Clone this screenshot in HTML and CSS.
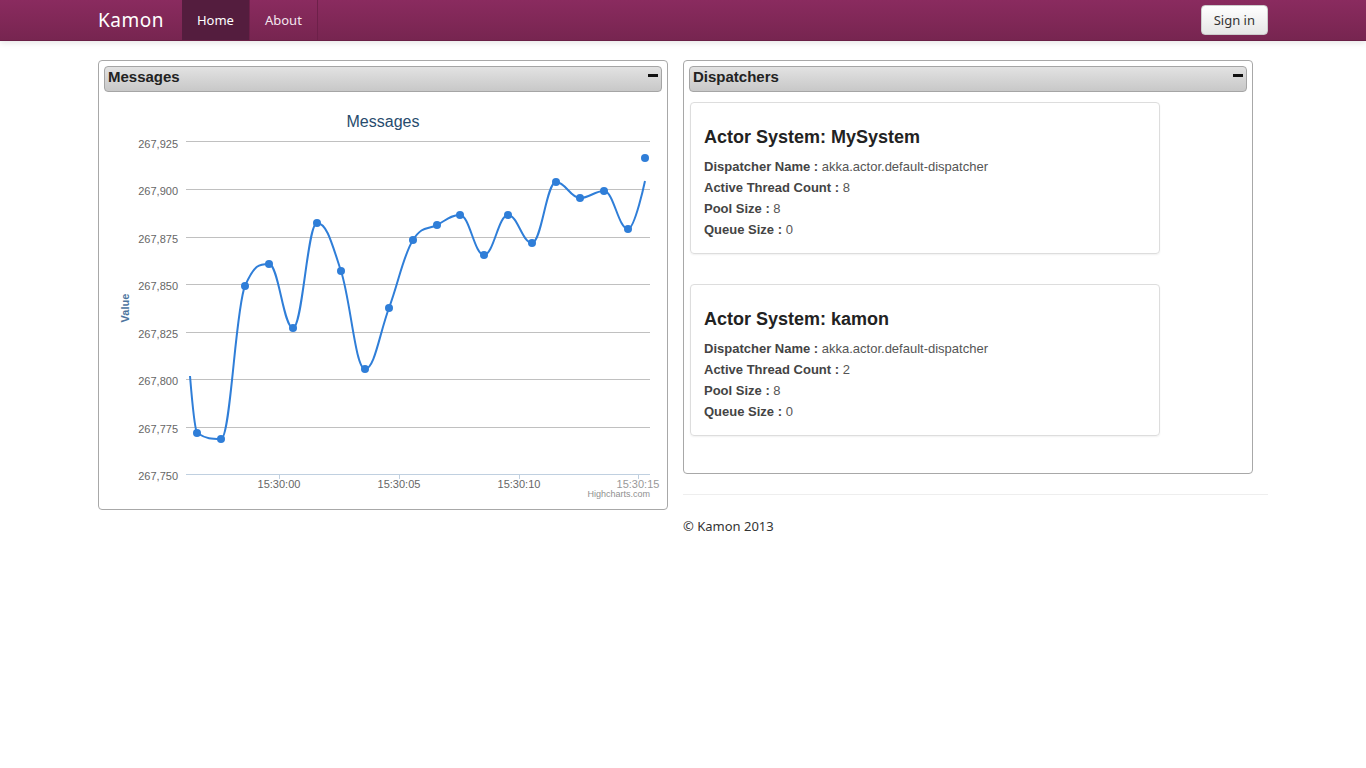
FILE: index.html
```html
<!DOCTYPE html>
<html>
<head>
<meta charset="utf-8">
<title>Kamon</title>
<link rel="stylesheet" href="styles.css">
</head>
<body>
<header class="navbar">
  <div class="nav-inner">
    <a class="brand" href="#">Kamon</a>
    <ul class="nav">
      <li class="active"><a href="#">Home</a></li>
      <li><a href="#">About</a></li>
    </ul>
    <button class="signin">Sign in</button>
  </div>
</header>

<main class="container">
  <section class="col">
    <div class="panel panel-messages">
      <div class="panel-head"><span>Messages</span><i class="minus"></i></div>
      <svg class="chart" width="568" height="417" viewBox="99 92 568 417" xmlns="http://www.w3.org/2000/svg">
        <text x="383" y="127" text-anchor="middle" class="c-title">Messages</text>
        <g stroke="#c0c0c0" stroke-width="1">
          <line x1="186" x2="650" y1="141.5" y2="141.5"/>
          <line x1="186" x2="650" y1="189.5" y2="189.5"/>
          <line x1="186" x2="650" y1="237.5" y2="237.5"/>
          <line x1="186" x2="650" y1="284.5" y2="284.5"/>
          <line x1="186" x2="650" y1="332.5" y2="332.5"/>
          <line x1="186" x2="650" y1="379.5" y2="379.5"/>
          <line x1="186" x2="650" y1="427.5" y2="427.5"/>
        </g>
        <g stroke="#c0d0e0" stroke-width="1">
          <line x1="186" x2="650" y1="474.5" y2="474.5"/>
          <line x1="279.5" x2="279.5" y1="474" y2="479"/>
          <line x1="399.5" x2="399.5" y1="474" y2="479"/>
          <line x1="519.5" x2="519.5" y1="474" y2="479"/>
          <line x1="638.5" x2="638.5" y1="474" y2="479"/>
        </g>
        <g class="c-ylab" text-anchor="end">
          <text x="178" y="148">267,925</text>
          <text x="178" y="195">267,900</text>
          <text x="178" y="243">267,875</text>
          <text x="178" y="290">267,850</text>
          <text x="178" y="338">267,825</text>
          <text x="178" y="385">267,800</text>
          <text x="178" y="433">267,775</text>
          <text x="178" y="480">267,750</text>
        </g>
        <g class="c-xlab" text-anchor="middle">
          <text x="279" y="488">15:30:00</text>
          <text x="399" y="488">15:30:05</text>
          <text x="519" y="488">15:30:10</text>
          <text x="638" y="488" class="c-faded">15:30:15</text>
        </g>
        <text class="c-axis" transform="translate(129 308) rotate(-90)" text-anchor="middle">Value</text>
        <path fill="none" stroke="#2f7ed8" stroke-width="2" stroke-linejoin="round" d="M190,376 C190,376 194.2,427 197,433 C206.6,439 211.4,439 221,439 C230.6,439 235.4,308 245,286 C254.6,264 259.4,264 269,264 C278.6,264 283.4,328 293,328 C302.6,328 307.4,223 317,223 C326.6,223 331.4,241.8 341,271 C350.6,300.2 355.4,369 365,369 C374.6,369 379.4,333.8 389,308 C398.6,282.2 403.4,255 413,240 C422.6,225 427.4,230.1 437,225 C446.2,220.1 450.8,215 460,215 C469.6,215 474.4,255 484,255 C493.6,255 498.4,215 508,215 C517.6,215 522.4,243 532,243 C541.6,243 546.4,182 556,182 C565.6,182 570.4,198 580,198 C589.6,198 594.4,191 604,191 C613.6,191 618.4,229 628,229 C634.8,229 645,181 645,181"/>
        <g fill="#2f7ed8">
          <circle cx="197" cy="433" r="4"/>
          <circle cx="221" cy="439" r="4"/>
          <circle cx="245" cy="286" r="4"/>
          <circle cx="269" cy="264" r="4"/>
          <circle cx="293" cy="328" r="4"/>
          <circle cx="317" cy="223" r="4"/>
          <circle cx="341" cy="271" r="4"/>
          <circle cx="365" cy="369" r="4"/>
          <circle cx="389" cy="308" r="4"/>
          <circle cx="413" cy="240" r="4"/>
          <circle cx="437" cy="225" r="4"/>
          <circle cx="460" cy="215" r="4"/>
          <circle cx="484" cy="255" r="4"/>
          <circle cx="508" cy="215" r="4"/>
          <circle cx="532" cy="243" r="4"/>
          <circle cx="556" cy="182" r="4"/>
          <circle cx="580" cy="198" r="4"/>
          <circle cx="604" cy="191" r="4"/>
          <circle cx="628" cy="229" r="4"/>
          <circle cx="645" cy="158" r="4"/>
        </g>
        <text x="650" y="497" text-anchor="end" class="c-credit">Highcharts.com</text>
      </svg>
    </div>
  </section>

  <section class="col">
    <div class="panel panel-dispatchers">
      <div class="panel-head"><span>Dispatchers</span><i class="minus"></i></div>
      <div class="cards">
        <div class="card">
          <h3>Actor System: MySystem</h3>
          <p><b>Dispatcher Name :</b> akka.actor.default-dispatcher</p>
          <p><b>Active Thread Count :</b> 8</p>
          <p><b>Pool Size :</b> 8</p>
          <p><b>Queue Size :</b> 0</p>
        </div>
        <div class="card">
          <h3>Actor System: kamon</h3>
          <p><b>Dispatcher Name :</b> akka.actor.default-dispatcher</p>
          <p><b>Active Thread Count :</b> 2</p>
          <p><b>Pool Size :</b> 8</p>
          <p><b>Queue Size :</b> 0</p>
        </div>
      </div>
    </div>
    <hr class="rule">
    <footer class="footer">© Kamon 2013</footer>
  </section>
</main>
</body>
</html>
```

FILE: styles.css
```css
* { box-sizing: border-box; }
html, body { margin: 0; padding: 0; background: #fff; }
body { font-family: "Noto Sans", "DejaVu Sans", sans-serif; color: #333; }

.navbar {
  height: 41px;
  background: linear-gradient(#8a2b5f, #772550);
  border-bottom: 1px solid #6a1f46;
  box-shadow: 0 2px 6px rgba(0,0,0,0.1);
}
.nav-inner {
  width: 1170px;
  margin: 0 auto;
  height: 40px;
  display: flex;
  align-items: center;
}
.brand {
  font-size: 19px;
  color: #fff;
  text-decoration: none;
  letter-spacing: 0.5px;
  margin-right: 18px;
  line-height: 40px;
}
.nav {
  display: flex;
  list-style: none;
  margin: 0;
  padding: 0;
  height: 40px;
}
.nav li { border-right: 1px solid #6d2049; }
.nav li a {
  display: block;
  padding: 0 15px;
  line-height: 40px;
  font-size: 13px;
  color: #f3e6ee;
  text-decoration: none;
}
.nav li.active a { background: #541d3e; color: #fff; }
.signin {
  margin-left: auto;
  height: 30px;
  padding: 0 12px;
  font-family: inherit;
  font-size: 13px;
  color: #333;
  background: linear-gradient(#fff, #e6e6e6);
  border: 1px solid #ccc;
  border-radius: 4px;
}

.container {
  width: 1170px;
  margin: 19px auto 0;
  display: grid;
  grid-template-columns: 585px 585px;
  align-items: start;
}

.panel {
  width: 570px;
  border: 1px solid #a8a8a8;
  border-radius: 4px;
  font-family: "Liberation Sans", Arial, sans-serif;
}
.panel-head {
  margin: 5px 5px 0;
  height: 26px;
  padding: 1px 3px 0;
  display: flex;
  align-items: flex-start;
  justify-content: space-between;
  background: linear-gradient(#e2e2e2, #c8c8c8);
  border: 1px solid #a5a5a5;
  border-radius: 4px;
  font-weight: bold;
  font-size: 15px;
  line-height: 18px;
  color: #222;
}
.minus {
  display: block;
  width: 10px;
  height: 3px;
  background: #111;
  margin-top: 6px;
}
.chart { display: block; }
.c-title { font-family: "Liberation Sans", Arial, sans-serif; font-size: 16px; fill: #274b6d; }
.c-ylab text, .c-xlab text { font-family: "Liberation Sans", Arial, sans-serif; font-size: 11px; fill: #666; }
.c-xlab .c-faded { fill: #999; }
.c-axis { font-family: "Liberation Sans", Arial, sans-serif; font-size: 11px; font-weight: bold; fill: #4d759e; }
.c-credit { font-family: "Liberation Sans", Arial, sans-serif; font-size: 9px; fill: #909090; }

.cards { padding: 10px 6px 37px; display: flex; flex-direction: column; gap: 30px; }
.card {
  width: 470px;
  border: 1px solid #ddd;
  border-radius: 4px;
  box-shadow: 0 1px 2px rgba(0,0,0,0.06);
  padding: 24px 13px 13px;
}
.card h3 {
  margin: 0 0 9px;
  font-size: 18px;
  line-height: 20px;
  color: #222;
}
.card p {
  margin: 0;
  font-size: 13px;
  line-height: 21px;
  color: #555;
}
.card b { color: #444; }

.rule {
  margin: 20px 0 0;
  border: 0;
  border-top: 1px solid #eee;
}
.footer {
  font-size: 13px;
  line-height: 20px;
  padding-top: 21px;
  color: #333;
}
```
